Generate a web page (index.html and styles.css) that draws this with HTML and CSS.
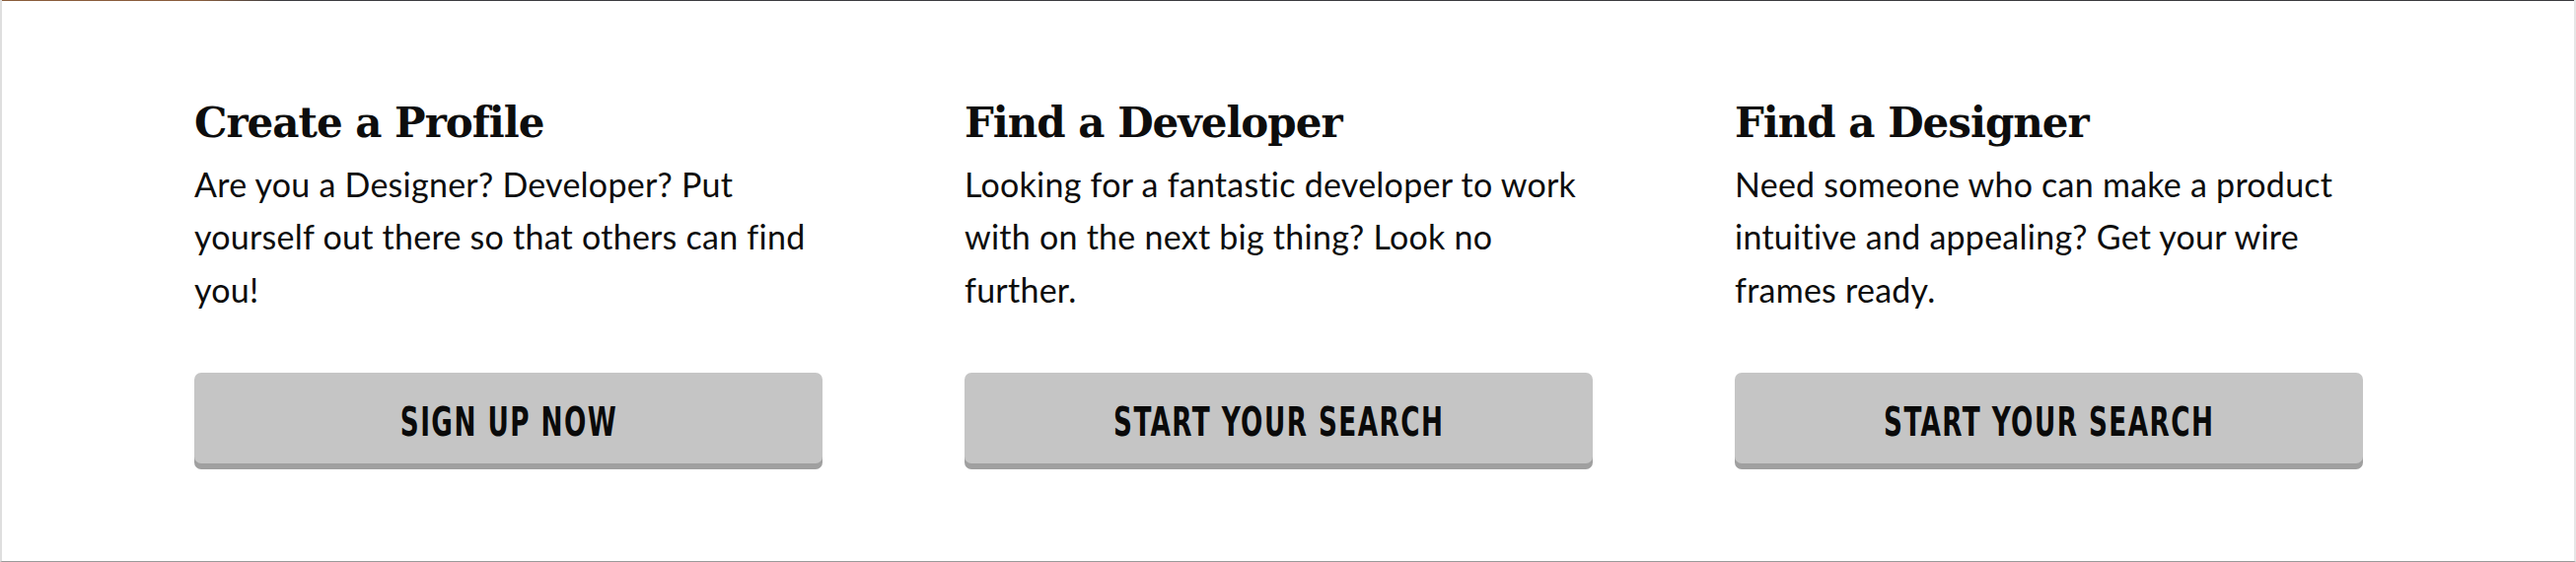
FILE: index.html
```html
<!DOCTYPE html>
<html lang="en">
<head>
<meta charset="utf-8">
<title>Features</title>
<link rel="stylesheet" href="styles.css">
</head>
<body>
<section class="features">
  <div class="feature">
    <h2 class="feature-title">Create a Profile</h2>
    <p class="feature-text">Are you a Designer? Developer? Put<br>yourself out there so that others can find<br>you!</p>
    <a class="btn" href="#"><span class="btn-label">SIGN UP NOW</span></a>
  </div>
  <div class="feature">
    <h2 class="feature-title">Find a Developer</h2>
    <p class="feature-text">Looking for a fantastic developer to work<br>with on the next big thing? Look no<br>further.</p>
    <a class="btn" href="#"><span class="btn-label">START YOUR SEARCH</span></a>
  </div>
  <div class="feature">
    <h2 class="feature-title">Find a Designer</h2>
    <p class="feature-text">Need someone who can make a product<br>intuitive and appealing? Get your wire<br>frames ready.</p>
    <a class="btn" href="#"><span class="btn-label">START YOUR SEARCH</span></a>
  </div>
</section>
</body>
</html>
```
FILE: styles.css
```css
html, body {
  margin: 0;
  padding: 0;
  background: #ffffff;
}

.features {
  box-sizing: border-box;
  height: 570px;
  width: 2612px;
  border-left: 2px solid #dedede;
  border-right: 2px solid #e6e6e6;
  border-bottom: 1px solid #9a9a9a;
  background:
    linear-gradient(90deg, #8a5c3b 0, #8a5d3d 200px, #3c3c40 280px, #3a3a3e 100%) top left / 100% 1px no-repeat,
    #ffffff;
  padding: 99px 0 0 195px;
  display: grid;
  grid-template-columns: repeat(3, 637px);
  column-gap: 144px;
  align-items: start;
}

.feature {
  display: flex;
  flex-direction: column;
}

.feature-title {
  margin: 0;
  font-family: "DejaVu Serif", "Liberation Serif", serif;
  font-weight: 700;
  font-size: 42px;
  line-height: 52px;
  letter-spacing: -1px;
  color: #0d0d0d;
}

.feature-text {
  margin: 9px 0 0;
  font-family: Lato, "Open Sans", sans-serif;
  font-size: 34px;
  line-height: 53.3px;
  letter-spacing: 0.25px;
  color: #0d0d0d;
}

.btn {
  margin-top: 58px;
  height: 92px;
  border-radius: 7px;
  background: #c5c5c5;
  box-shadow: 0 6px 0 #a0a0a0;
  display: flex;
  align-items: center;
  justify-content: center;
  padding-top: 8px;
  box-sizing: border-box;
  text-decoration: none;
  color: #0a0a0a;
}

.btn-label {
  display: inline-block;
  font-family: "DejaVu Sans Condensed", "DejaVu Sans", sans-serif;
  font-stretch: condensed;
  font-weight: 700;
  font-size: 40px;
  line-height: 1;
  letter-spacing: 2px;
  transform: scaleX(0.73);
}
```
